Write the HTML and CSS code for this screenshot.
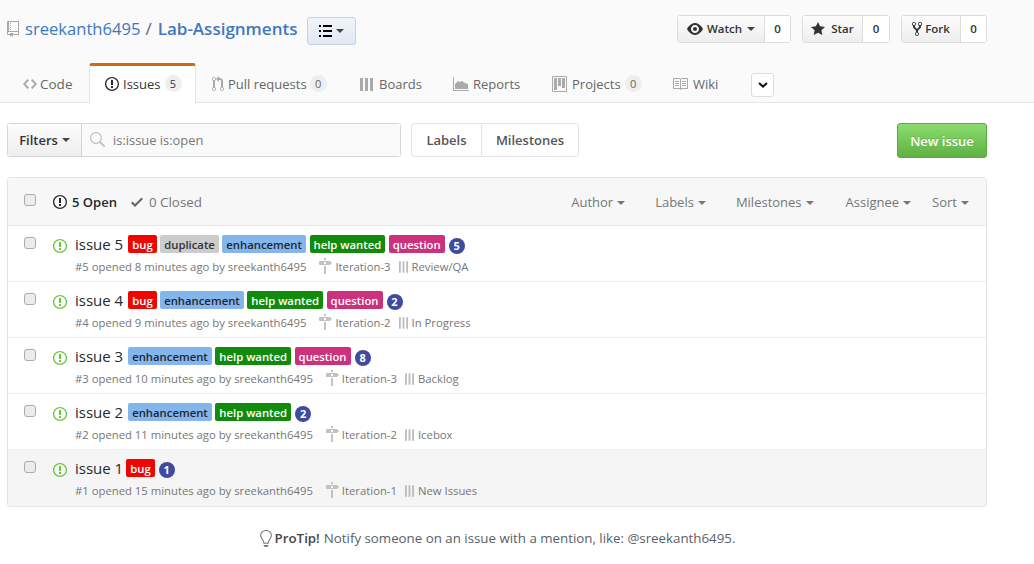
FILE: index.html
```html
<!DOCTYPE html>
<html>
<head>
  <title>Issues · sreekanth6495/Lab-Assignments</title>
  <link rel="stylesheet" href="styles.css">
</head>
<body>
  <svg class="sprite" xmlns="http://www.w3.org/2000/svg">
    <symbol id="i-repo" viewBox="0 0 12 16"><path d="M4 9H3V8h1v1zm0-3H3v1h1V6zm0-2H3v1h1V4zm0-2H3v1h1V2zm8-1v12c0 .55-.45 1-1 1H6v2l-1.5-1.5L3 16v-2H1c-.55 0-1-.45-1-1V1c0-.55.45-1 1-1h10c.55 0 1 .45 1 1zm-1 10H1v2h2v-1h3v1h5v-2zm0-10H2v9h9V1z"/></symbol>
    <symbol id="i-eye" viewBox="0 0 16 16"><path d="M8.06 2C3 2 0 8 0 8s3 6 8.06 6C13 14 16 8 16 8s-3-6-7.94-6zM8 12c-2.2 0-4-1.78-4-4 0-2.2 1.8-4 4-4 2.22 0 4 1.8 4 4 0 2.22-1.78 4-4 4zm2-4c0 1.11-.89 2-2 2-1.11 0-2-.89-2-2 0-1.11.89-2 2-2 1.11 0 2 .89 2 2z"/></symbol>
    <symbol id="i-star" viewBox="0 0 14 16"><path d="M14 6l-4.9-.64L7 1 4.9 5.36 0 6l3.6 3.26L2.67 14 7 11.67 11.33 14l-.93-4.74L14 6z"/></symbol>
    <symbol id="i-fork" viewBox="0 0 10 16"><path d="M8 1a1.993 1.993 0 0 0-1 3.72V6L5 8 3 6V4.72A1.993 1.993 0 0 0 2 1a1.993 1.993 0 0 0-1 3.72V6.5l3 3v1.78A1.993 1.993 0 0 0 5 15a1.993 1.993 0 0 0 1-3.72V9.5l3-3V4.72A1.993 1.993 0 0 0 8 1zM2 4.2C1.34 4.2.8 3.65.8 3c0-.65.55-1.2 1.2-1.2.65 0 1.2.55 1.2 1.2 0 .65-.55 1.2-1.2 1.2zm3 10c-.66 0-1.2-.55-1.2-1.2 0-.65.55-1.2 1.2-1.2.65 0 1.2.55 1.2 1.2 0 .65-.55 1.2-1.2 1.2zm3-10c-.66 0-1.2-.55-1.2-1.2 0-.65.55-1.2 1.2-1.2.65 0 1.2.55 1.2 1.2 0 .65-.55 1.2-1.2 1.2z"/></symbol>
    <symbol id="i-code" viewBox="0 0 14 16"><path d="M9.5 3L8 4.5 11.5 8 8 11.5 9.5 13 14 8 9.5 3zm-5 0L0 8l4.5 5L6 11.5 2.5 8 6 4.5 4.5 3z"/></symbol>
    <symbol id="i-issue" viewBox="0 0 14 16"><path d="M7 2.3c3.14 0 5.7 2.56 5.7 5.7s-2.56 5.7-5.7 5.7A5.71 5.71 0 0 1 1.3 8c0-3.14 2.56-5.7 5.7-5.7zM7 1C3.14 1 0 4.14 0 8s3.14 7 7 7 7-3.14 7-7-3.14-7-7-7zm1 3H6v5h2V4zm0 6H6v2h2v-2z"/></symbol>
    <symbol id="i-pull" viewBox="0 0 12 16"><path d="M11 11.28V5c-.03-.78-.34-1.47-.94-2.06C9.46 2.35 8.78 2.03 8 2H7V0L4 3l3 3V4h1c.27.02.48.11.69.31.21.2.3.42.31.69v6.28A1.993 1.993 0 0 0 10 15a1.993 1.993 0 0 0 1-3.72zm-1 2.92c-.66 0-1.2-.55-1.2-1.2 0-.65.55-1.2 1.2-1.2.65 0 1.2.55 1.2 1.2 0 .65-.55 1.2-1.2 1.2zM4 3c0-1.11-.89-2-2-2a1.993 1.993 0 0 0-1 3.72v6.56A1.993 1.993 0 0 0 2 15a1.993 1.993 0 0 0 1-3.72V4.72c.59-.34 1-.98 1-1.72zm-.8 10c0 .66-.55 1.2-1.2 1.2-.65 0-1.2-.55-1.2-1.2 0-.65.55-1.2 1.2-1.2.65 0 1.2.55 1.2 1.2zM2 4.2C1.34 4.2.8 3.65.8 3c0-.65.55-1.2 1.2-1.2.65 0 1.2.55 1.2 1.2 0 .65-.55 1.2-1.2 1.2z"/></symbol>
    <symbol id="i-bars" viewBox="0 0 14 16"><path d="M0 2h3v13H0zM5 2h3v13H5zM10 2h3v13h-3z"/></symbol>
    <symbol id="i-thinbars" viewBox="0 0 10 13"><path d="M0 0h2v13H0zM4 0h2v13H4zM8 0h2v13H8z"/></symbol>
    <symbol id="i-reports" viewBox="0 0 16 14"><path d="M0 0h1v13h15v1H0zM2 12V7l3-3 2 1 2-1 3 2 3 1v5z"/></symbol>
    <symbol id="i-project" viewBox="0 0 15 16"><path fill-rule="evenodd" d="M10 12h3V2h-3v10zm-4-2h3V2H6v8zm-4 4h3V2H2v12zm-1 1h13V1H1v14zM14 0H1a1 1 0 0 0-1 1v14a1 1 0 0 0 1 1h13a1 1 0 0 0 1-1V1a1 1 0 0 0-1-1z"/></symbol>
    <symbol id="i-book" viewBox="0 0 16 16"><path d="M3 5h4v1H3V5zm0 3h4V7H3v1zm0 2h4V9H3v1zm11-5h-4v1h4V5zm0 2h-4v1h4V7zm0 2h-4v1h4V9zm2-6v9c0 .55-.45 1-1 1H9.5l-1 1-1-1H2c-.55 0-1-.45-1-1V3c0-.55.45-1 1-1h5.5l1 1 1-1H15c.55 0 1 .45 1 1zm-8 .5L7.5 3H2v9h6V3.5zm7-.5H9.5l-.5.5V12h6V3z"/></symbol>
    <symbol id="i-check" viewBox="0 0 12 16"><path d="M12 5l-8 8-4-4 1.5-1.5L4 10l6.5-6.5L12 5z"/></symbol>
    <symbol id="i-search" viewBox="0 0 16 16"><path d="M15.7 13.3l-3.81-3.83A5.93 5.93 0 0 0 13 6c0-3.31-2.69-6-6-6S1 2.69 1 6s2.69 6 6 6c1.3 0 2.48-.41 3.47-1.11l3.83 3.81c.19.2.45.3.7.3.25 0 .52-.09.7-.3a.996.996 0 0 0 0-1.41v.01zM7 10.7c-2.59 0-4.7-2.11-4.7-4.7 0-2.59 2.11-4.7 4.7-4.7 2.59 0 4.7 2.11 4.7 4.7 0 2.59-2.11 4.7-4.7 4.7z"/></symbol>
    <symbol id="i-bulb" viewBox="0 0 12 16"><path d="M6.5 0C3.48 0 1 2.19 1 5c0 .92.55 2.25 1 3 1.34 2.25 1.78 2.78 2 4v1h5v-1c.22-1.22.66-1.75 2-4 .45-.75 1-2.08 1-3 0-2.81-2.48-5-5.5-5zm3.64 7.48c-.25.44-.47.8-.67 1.11-.86 1.41-1.25 2.06-1.45 3.23-.02.05-.02.11-.02.17H5c0-.06 0-.13-.02-.17-.2-1.17-.59-1.83-1.45-3.23-.2-.31-.42-.67-.67-1.11C2.44 6.78 2 5.65 2 5c0-2.2 2.02-4 4.5-4 1.22 0 2.36.42 3.22 1.19C10.55 2.94 11 3.94 11 5c0 .66-.44 1.78-.86 2.48zM4 14h5c-.23 1.14-1.3 2-2.5 2s-2.27-.86-2.5-2z"/></symbol>
    <symbol id="i-milestone" viewBox="0 0 14 16"><path d="M8 2H6V0h2v2zm4 5H2c-.55 0-1-.45-1-1V4c0-.55.45-1 1-1h10l2 2-2 2zM8 4H6v2h2V4zM6 16h2V8H6v8z"/></symbol>
  </svg>

  <!-- Repo header -->
  <div class="repohead">
    <div class="titlebar">
      <svg class="icon icon-repo"><use href="#i-repo"/></svg>
      <a class="owner">sreekanth6495</a>
      <span class="slash">/</span>
      <a class="reponame">Lab-Assignments</a>
      <button class="menu-btn">
        <span class="list-lines"><i></i><i></i><i></i></span>
        <span class="caret caret-dark"></span>
      </button>
      <div class="actions">
        <div class="social watch">
          <span class="social-btn"><svg class="icon icon-eye"><use href="#i-eye"/></svg>Watch<span class="caret caret-dark"></span></span>
          <span class="social-count">0</span>
        </div>
        <div class="social star">
          <span class="social-btn"><svg class="icon icon-star"><use href="#i-star"/></svg>Star</span>
          <span class="social-count">0</span>
        </div>
        <div class="social fork">
          <span class="social-btn"><svg class="icon icon-fork"><use href="#i-fork"/></svg>Fork</span>
          <span class="social-count">0</span>
        </div>
      </div>
    </div>

    <nav class="tabs">
      <a class="tab tab-code"><svg class="icon icon-code"><use href="#i-code"/></svg>Code</a>
      <a class="tab tab-issues selected"><svg class="icon icon-issue"><use href="#i-issue"/></svg>Issues<span class="counter">5</span></a>
      <a class="tab tab-pulls"><svg class="icon icon-pull"><use href="#i-pull"/></svg>Pull requests<span class="counter">0</span></a>
      <a class="tab tab-boards"><svg class="icon icon-bars"><use href="#i-bars"/></svg>Boards</a>
      <a class="tab tab-reports"><svg class="icon icon-reports"><use href="#i-reports"/></svg>Reports</a>
      <a class="tab tab-projects"><svg class="icon icon-project"><use href="#i-project"/></svg>Projects<span class="counter">0</span></a>
      <a class="tab tab-wiki"><svg class="icon icon-book"><use href="#i-book"/></svg>Wiki</a>
      <button class="more-btn"><svg viewBox="0 0 10 6" class="chevron"><path d="M1 1l4 3.6L9 1" /></svg></button>
    </nav>
  </div>

  <div class="container">
    <!-- Filter bar -->
    <div class="subnav">
      <div class="search-group">
        <span class="filters-btn">Filters<span class="caret caret-dark"></span></span>
        <span class="search-box"><svg class="icon icon-search"><use href="#i-search"/></svg>is:issue is:open</span>
      </div>
      <div class="links-group">
        <a class="link-labels">Labels</a>
        <a class="link-milestones">Milestones</a>
      </div>
      <a class="new-issue">New issue</a>
    </div>

    <!-- Issue list -->
    <div class="issues">
      <div class="issues-head">
        <input type="checkbox" class="check">
        <span class="state-open"><svg class="icon icon-issue"><use href="#i-issue"/></svg>5 Open</span>
        <span class="state-closed"><svg class="icon icon-check"><use href="#i-check"/></svg>0 Closed</span>
        <div class="head-filters">
          <span class="hf-author">Author<span class="caret"></span></span>
          <span class="hf-labels">Labels<span class="caret"></span></span>
          <span class="hf-milestones">Milestones<span class="caret"></span></span>
          <span class="hf-assignee">Assignee<span class="caret"></span></span>
          <span class="hf-sort">Sort<span class="caret"></span></span>
        </div>
      </div>

      <div class="issue">
        <input type="checkbox" class="check">
        <svg class="icon icon-open"><use href="#i-issue"/></svg>
        <div class="issue-main">
          <div class="issue-title">
            <a class="title-text">issue 5</a>
            <span class="label bug">bug</span>
            <span class="label duplicate">duplicate</span>
            <span class="label enhancement">enhancement</span>
            <span class="label help">help wanted</span>
            <span class="label question">question</span>
            <span class="points">5</span>
          </div>
          <div class="issue-meta">
            <span class="opened">#5 opened 8 minutes ago by sreekanth6495</span>
            <span class="milestone"><svg class="icon icon-milestone"><use href="#i-milestone"/></svg>Iteration-3</span>
            <span class="column"><svg class="icon icon-thinbars"><use href="#i-thinbars"/></svg>Review/QA</span>
          </div>
        </div>
      </div>

      <div class="issue">
        <input type="checkbox" class="check">
        <svg class="icon icon-open"><use href="#i-issue"/></svg>
        <div class="issue-main">
          <div class="issue-title">
            <a class="title-text">issue 4</a>
            <span class="label bug">bug</span>
            <span class="label enhancement">enhancement</span>
            <span class="label help">help wanted</span>
            <span class="label question">question</span>
            <span class="points">2</span>
          </div>
          <div class="issue-meta">
            <span class="opened">#4 opened 9 minutes ago by sreekanth6495</span>
            <span class="milestone"><svg class="icon icon-milestone"><use href="#i-milestone"/></svg>Iteration-2</span>
            <span class="column"><svg class="icon icon-thinbars"><use href="#i-thinbars"/></svg>In Progress</span>
          </div>
        </div>
      </div>

      <div class="issue">
        <input type="checkbox" class="check">
        <svg class="icon icon-open"><use href="#i-issue"/></svg>
        <div class="issue-main">
          <div class="issue-title">
            <a class="title-text">issue 3</a>
            <span class="label enhancement">enhancement</span>
            <span class="label help">help wanted</span>
            <span class="label question">question</span>
            <span class="points">8</span>
          </div>
          <div class="issue-meta">
            <span class="opened">#3 opened 10 minutes ago by sreekanth6495</span>
            <span class="milestone"><svg class="icon icon-milestone"><use href="#i-milestone"/></svg>Iteration-3</span>
            <span class="column"><svg class="icon icon-thinbars"><use href="#i-thinbars"/></svg>Backlog</span>
          </div>
        </div>
      </div>

      <div class="issue">
        <input type="checkbox" class="check">
        <svg class="icon icon-open"><use href="#i-issue"/></svg>
        <div class="issue-main">
          <div class="issue-title">
            <a class="title-text">issue 2</a>
            <span class="label enhancement">enhancement</span>
            <span class="label help">help wanted</span>
            <span class="points">2</span>
          </div>
          <div class="issue-meta">
            <span class="opened">#2 opened 11 minutes ago by sreekanth6495</span>
            <span class="milestone"><svg class="icon icon-milestone"><use href="#i-milestone"/></svg>Iteration-2</span>
            <span class="column"><svg class="icon icon-thinbars"><use href="#i-thinbars"/></svg>Icebox</span>
          </div>
        </div>
      </div>

      <div class="issue hovered">
        <input type="checkbox" class="check">
        <svg class="icon icon-open"><use href="#i-issue"/></svg>
        <div class="issue-main">
          <div class="issue-title">
            <a class="title-text">issue 1</a>
            <span class="label bug">bug</span>
            <span class="points">1</span>
          </div>
          <div class="issue-meta">
            <span class="opened">#1 opened 15 minutes ago by sreekanth6495</span>
            <span class="milestone"><svg class="icon icon-milestone"><use href="#i-milestone"/></svg>Iteration-1</span>
            <span class="column"><svg class="icon icon-thinbars"><use href="#i-thinbars"/></svg>New Issues</span>
          </div>
        </div>
      </div>
    </div>

    <p class="protip"><svg class="icon icon-bulb"><use href="#i-bulb"/></svg><strong>ProTip!</strong> Notify someone on an issue with a mention, like: @sreekanth6495.</p>
  </div>
</body>
</html>
```

FILE: styles.css
```css
body {
  margin: 0;
  font-family: "Open Sans", "Noto Sans", sans-serif;
  font-size: 13px;
  color: #24292e;
  background-color: #ffffff;
}
a {
  text-decoration: none;
}
.sprite {
  display: none;
}
.icon {
  display: block;
  flex: none;
  fill: currentColor;
}
.caret {
  display: inline-block;
  width: 0;
  height: 0;
  margin-left: 4px;
  border: 4px solid transparent;
  border-top-color: #777;
  border-bottom: 0;
  vertical-align: middle;
}
.caret-dark {
  border-top-color: #444;
}

/* repo header */
.repohead {
  height: 102px;
  background-color: #fafafa;
  border-bottom: 1px solid #e5e5e5;
}
.titlebar {
  display: flex;
  align-items: center;
  height: 30px;
  padding: 15px 47px 0 7px;
}
.icon-repo {
  width: 12px;
  height: 16px;
  margin: -3px 6px 0 0;
  color: #a8a8a8;
}
.owner {
  padding-bottom: 4px;
  font-size: 16.6px;
  color: #4078c0;
}
.slash {
  margin: 0 6px 0 5px;
  padding-bottom: 4px;
  font-size: 17px;
  color: #666;
}
.reponame {
  padding-bottom: 4px;
  font-size: 17px;
  font-weight: 600;
  color: #4078c0;
}
.menu-btn {
  display: flex;
  align-items: center;
  justify-content: center;
  width: 49px;
  height: 28px;
  margin: 2px 0 0 10px;
  padding: 0;
  border: 1px solid #c5d0e0;
  border-radius: 3px;
  background: linear-gradient(#f0f4fa, #e1e8f3);
}
.list-lines {
  display: flex;
  flex-direction: column;
  gap: 3px;
  width: 13px;
}
.list-lines i {
  display: block;
  height: 2px;
  background: linear-gradient(to right, #000 2px, transparent 2px, transparent 4px, #000 4px);
}
.actions {
  display: flex;
  gap: 11px;
  margin-left: auto;
  margin-top: -3px;
}
.social {
  display: flex;
  height: 28px;
  border: 1px solid #dcdcdc;
  border-radius: 3px;
  box-sizing: border-box;
  font-size: 11.5px;
}
.social-btn {
  display: flex;
  align-items: center;
  justify-content: center;
  box-sizing: border-box;
  background: linear-gradient(#fcfcfc, #eeeeee);
  border-right: 1px solid #dcdcdc;
  color: #333;
  font-weight: 600;
}
.social-btn .caret {
  margin-left: 5px;
}
.social-count {
  flex: 1;
  display: flex;
  align-items: center;
  justify-content: center;
  background-color: #ffffff;
  color: #333;
  font-weight: 600;
}
.watch { width: 114px; }
.watch .social-btn { width: 87px; }
.star { width: 88px; }
.star .social-btn { width: 60px; }
.fork { width: 86px; }
.fork .social-btn { width: 59px; }
.icon-eye { width: 16px; height: 16px; margin-right: 4px; }
.icon-star { width: 14px; height: 16px; margin-right: 6px; }
.icon-fork { width: 10px; height: 16px; margin-right: 3px; }

/* tabs */
.tabs {
  display: flex;
  align-items: flex-end;
  height: 40px;
  margin-top: 18px;
  padding-left: 7px;
  font-size: 13px;
  color: #666;
}
.tab {
  display: flex;
  align-items: center;
  height: 40px;
  box-sizing: border-box;
  padding: 1px 0 0 16px;
}
.tab .icon {
  margin-right: 4px;
  color: #aaa;
}
.tab.selected {
  padding-top: 0;
  padding-bottom: 3px;
  color: #333;
  background-color: #ffffff;
  border: 1px solid #e5e5e5;
  border-top: 3px solid #d26911;
  border-bottom: 0;
  border-radius: 3px 3px 0 0;
  position: relative;
  z-index: 1;
  margin-bottom: -1px;
  height: 41px;
}
.tab.selected .icon {
  color: #24292e;
}
.tab-code { width: 82px; font-size: 13.5px; }
.tab-issues { width: 107px; padding-left: 15px; }
.tab-pulls { width: 148px; }
.tab-boards { width: 93px; }
.tab-reports { width: 99px; }
.tab-projects { width: 120px; }
.tab-wiki { width: 95px; }
.icon-code { width: 14px; height: 16px; }
.icon-issue { width: 14px; height: 16px; }
.icon-pull { width: 12px; height: 16px; }
.icon-bars { width: 14px; height: 16px; }
.icon-reports { width: 16px; height: 14px; }
.icon-project { width: 15px; height: 16px; }
.icon-book { width: 16px; height: 16px; }
.tab-code .icon { margin-right: 3px; }
.tab-boards .icon,
.tab-projects .icon,
.tab-wiki .icon { margin-right: 5px; }
.tab-pulls .counter { margin-left: 3px; }
.counter {
  min-width: 17px;
  height: 17px;
  margin-left: 4px;
  border-radius: 9px;
  background-color: #eeeeee;
  font-size: 11px;
  line-height: 17px;
  text-align: center;
}
.more-btn {
  display: flex;
  align-items: center;
  justify-content: center;
  width: 23px;
  height: 24px;
  margin-bottom: 6px;
  padding: 0;
  border: 1px solid #dddddd;
  border-radius: 3px;
  background-color: #ffffff;
}
.chevron {
  width: 10px;
  height: 6px;
  fill: none;
  stroke: #111;
  stroke-width: 2;
}

/* filter bar */
.container {
  width: 980px;
  margin-left: 7px;
}
.subnav {
  display: flex;
  align-items: flex-start;
  margin-top: 20px;
}
.search-group {
  display: flex;
  width: 394px;
  height: 34px;
  box-sizing: border-box;
  border: 1px solid #d5d5d5;
  border-radius: 3px;
}
.filters-btn {
  display: flex;
  align-items: center;
  justify-content: center;
  width: 73px;
  background: linear-gradient(#fcfcfc, #eeeeee);
  border-right: 1px solid #d5d5d5;
  color: #333;
  font-weight: 600;
}
.filters-btn .caret {
  margin-left: 4px;
}
.search-box {
  flex: 1;
  display: flex;
  align-items: center;
  padding-left: 7px;
  background-color: #fafafa;
  font-size: 12.9px;
  color: #777;
}
.icon-search {
  width: 16px;
  height: 16px;
  margin-right: 8px;
  color: #c4c4c4;
}
.links-group {
  display: flex;
  height: 34px;
  box-sizing: border-box;
  margin-left: 10px;
  border: 1px solid #e5e5e5;
  border-radius: 3px;
  font-weight: 600;
  color: #555;
}
.links-group a {
  display: flex;
  align-items: center;
  justify-content: center;
}
.link-labels {
  width: 69px;
  border-right: 1px solid #e5e5e5;
}
.link-milestones {
  width: 96px;
}
.new-issue {
  display: flex;
  align-items: center;
  justify-content: center;
  width: 90px;
  height: 35px;
  box-sizing: border-box;
  margin-left: auto;
  border: 1px solid #5ca941;
  border-radius: 3px;
  background: linear-gradient(#8add6d, #60b044);
  color: #ffffff;
  font-weight: 600;
  text-shadow: 0 -1px 0 rgba(0, 0, 0, 0.15);
}

/* issue list */
.issues {
  margin-top: 19px;
  border: 1px solid #e5e5e5;
  border-radius: 3px;
}
.issues-head {
  display: flex;
  align-items: center;
  height: 48px;
  box-sizing: border-box;
  padding-left: 16px;
  background-color: #f7f7f7;
  border-bottom: 1px solid #e5e5e5;
  color: #767676;
}
.check {
  appearance: none;
  flex: none;
  width: 12px;
  height: 12px;
  margin: 0;
  border: 1px solid #ababab;
  border-radius: 3px;
  background-color: #ececec;
  box-sizing: border-box;
}
.issues-head .check {
  margin-top: -4px;
}
.state-open {
  display: flex;
  align-items: center;
  margin-left: 17px;
  color: #24292e;
  font-weight: 600;
}
.state-open .icon {
  margin-right: 5px;
}
.state-closed {
  display: flex;
  align-items: center;
  margin-left: 14px;
  font-size: 13.4px;
}
.icon-check {
  width: 12px;
  height: 16px;
  margin-right: 6px;
  color: #666;
}
.head-filters {
  display: flex;
  margin-left: auto;
  padding-right: 17px;
}
.hf-labels { margin-left: 30px; }
.hf-milestones { margin-left: 30px; }
.hf-assignee { margin-left: 32px; }
.hf-sort { margin-left: 21px; }
.issue {
  display: flex;
  align-items: flex-start;
  height: 56px;
  box-sizing: border-box;
  padding: 9px 0 0 16px;
  border-bottom: 1px solid #eeeeee;
}
.issue:last-child {
  border-bottom: 0;
  background-color: #f5f5f5;
}
.issue .check {
  margin-top: 2px;
}
.icon-open {
  width: 14px;
  height: 16px;
  margin: 3px 8px 0 17px;
  color: #6cc644;
}
.issue-title {
  display: flex;
  align-items: center;
  gap: 3.5px;
  height: 18px;
}
.title-text {
  margin-right: 1.5px;
  font-size: 15px;
  color: #24292e;
}
.hovered .title-text {
  margin-right: -0.5px;
}
.label {
  height: 18px;
  padding: 0 4px;
  border-radius: 2px;
  box-sizing: border-box;
  font-size: 11.3px;
  font-weight: 600;
  line-height: 20px;
  color: #ffffff;
}
.bug { background-color: #ee0701; }
.duplicate { background-color: #cccccc; color: #333; }
.enhancement { background-color: #84b6eb; color: #1c2733; }
.help { background-color: #128a0c; }
.question { background-color: #cc317c; }
.points {
  width: 16px;
  height: 16px;
  margin: 4px 0 0 0.5px;
  border-radius: 50%;
  background-color: #3e4b9e;
  color: #ffffff;
  font-size: 11px;
  font-weight: 700;
  line-height: 16px;
  text-align: center;
}
.issue-meta {
  display: flex;
  align-items: center;
  margin-top: 5px;
  font-size: 11.3px;
  color: #767676;
}
.milestone {
  display: flex;
  align-items: center;
  margin-left: 12px;
  padding-bottom: 1px;
}
.icon-milestone {
  width: 14px;
  height: 16px;
  margin-right: 3px;
  color: #c2c2c2;
}
.column {
  display: flex;
  align-items: center;
  margin-left: 8px;
}
.icon-thinbars {
  width: 9px;
  height: 12px;
  margin-right: 4px;
  color: #bbb;
}

/* tip */
.protip {
  display: flex;
  align-items: center;
  justify-content: center;
  margin: 22px 0 0;
  font-size: 13.3px;
  color: #586069;
}
.protip strong {
  margin-right: 4px;
  font-weight: 600;
  color: #444;
}
.icon-bulb {
  width: 13px;
  height: 17px;
  margin-right: 3px;
  color: #777;
}
```
